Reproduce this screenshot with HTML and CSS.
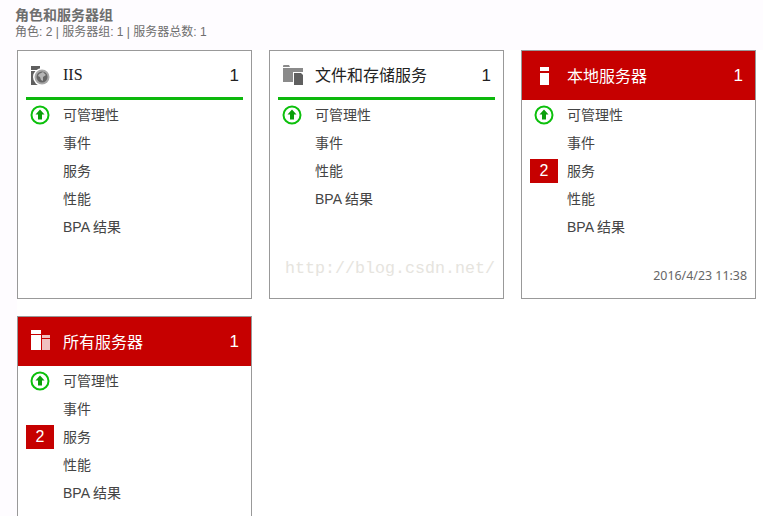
FILE: index.html
```html
<!DOCTYPE html>
<html lang="zh">
<head>
<meta charset="utf-8">
<title>角色和服务器组</title>
<link rel="stylesheet" href="styles.css">
</head>
<body>
<header class="head">
  <h1 class="title">角色和服务器组</h1>
  <p class="sub">角色: 2 | 服务器组: 1 | 服务器总数: 1</p>
</header>
<main class="grid">
  <section class="card">
    <div class="card-head ok">
      <svg class="ico" width="22" height="22" viewBox="0 0 22 22"><path fill="#5f5f5f" d="M1 3h9v4H1zM1 8h9v14H1z"/><circle cx="12" cy="14" r="9" fill="#fff"/><circle cx="12" cy="14" r="7.500" fill="#a8a8a8"/><circle cx="12" cy="14" r="5.500" fill="#666"/><path fill="#b5b5b5" d="M9 11l4-2 3 3-3 2v4l-2-1-1-3-2-1z"/></svg>
      <span class="name latin">IIS</span><span class="count">1</span>
    </div>
    <ul class="rows">
      <li class="row"><span class="slot"><svg width="20" height="20" viewBox="0 0 20 20"><circle cx="10" cy="10" r="8.500" fill="#fff" stroke="#0cc00c" stroke-width="2"/><path fill="#0a9f0a" d="M10 4.500l4.500 5H12v5H8v-5H5.500z"/></svg></span>可管理性</li>
      <li class="row"><span class="slot"></span>事件</li>
      <li class="row"><span class="slot"></span>服务</li>
      <li class="row"><span class="slot"></span>性能</li>
      <li class="row"><span class="slot"></span>BPA 结果</li>
    </ul>
  </section>
  <section class="card">
    <div class="card-head ok">
      <svg class="ico" width="22" height="22" viewBox="0 0 22 22"><path fill="#8a8a8a" d="M1 3a1 1 0 0 1 1-1h5l1 2h-7zM1 5h20v4h-10v10H1z"/><path fill="#5f5f5f" d="M12 10h7l2 2v10h-9z"/></svg>
      <span class="name">文件和存储服务</span><span class="count">1</span>
    </div>
    <ul class="rows">
      <li class="row"><span class="slot"><svg width="20" height="20" viewBox="0 0 20 20"><circle cx="10" cy="10" r="8.500" fill="#fff" stroke="#0cc00c" stroke-width="2"/><path fill="#0a9f0a" d="M10 4.500l4.500 5H12v5H8v-5H5.500z"/></svg></span>可管理性</li>
      <li class="row"><span class="slot"></span>事件</li>
      <li class="row"><span class="slot"></span>性能</li>
      <li class="row"><span class="slot"></span>BPA 结果</li>
    </ul>
    <span class="mark">http://blog.csdn.net/</span>
  </section>
  <section class="card">
    <div class="card-head alert">
      <svg class="ico" width="22" height="22" viewBox="0 0 22 22"><path fill="#fff" d="M6 3h9v4H6zM6 9h9v12H6z"/></svg>
      <span class="name">本地服务器</span><span class="count">1</span>
    </div>
    <ul class="rows">
      <li class="row"><span class="slot"><svg width="20" height="20" viewBox="0 0 20 20"><circle cx="10" cy="10" r="8.500" fill="#fff" stroke="#0cc00c" stroke-width="2"/><path fill="#0a9f0a" d="M10 4.500l4.500 5H12v5H8v-5H5.500z"/></svg></span>可管理性</li>
      <li class="row"><span class="slot"></span>事件</li>
      <li class="row"><span class="slot"><span class="badge">2</span></span>服务</li>
      <li class="row"><span class="slot"></span>性能</li>
      <li class="row"><span class="slot"></span>BPA 结果</li>
    </ul>
    <time class="stamp">2016/4/23 11:38</time>
  </section>
  <section class="card">
    <div class="card-head alert">
      <svg class="ico" width="22" height="22" viewBox="0 0 22 22"><path fill="#fff" d="M1 0h10v4H1zM1 5h10v15H1z"/><path fill="#f0c0c0" d="M12 5h8v3h-8zM12 9h8v11h-8z"/></svg>
      <span class="name">所有服务器</span><span class="count">1</span>
    </div>
    <ul class="rows">
      <li class="row"><span class="slot"><svg width="20" height="20" viewBox="0 0 20 20"><circle cx="10" cy="10" r="8.500" fill="#fff" stroke="#0cc00c" stroke-width="2"/><path fill="#0a9f0a" d="M10 4.500l4.500 5H12v5H8v-5H5.500z"/></svg></span>可管理性</li>
      <li class="row"><span class="slot"></span>事件</li>
      <li class="row"><span class="slot"><span class="badge">2</span></span>服务</li>
      <li class="row"><span class="slot"></span>性能</li>
      <li class="row"><span class="slot"></span>BPA 结果</li>
    </ul>
  </section>
</main>
</body>
</html>
```
FILE: styles.css
```css
* { box-sizing: border-box; }
body {
  margin: 0;
  height: 516px;
  overflow: hidden;
  background: #fff;
  font-family: "Liberation Sans", "Noto Sans CJK SC", sans-serif;
  color: #444;
}
.head {
  height: 50px;
  padding: 7px 0 0 15px;
  background: #fefcff;
}
.title {
  margin: 0;
  font-size: 14px;
  line-height: 17px;
  font-weight: 700;
  color: #6e6e6e;
}
.sub {
  margin: 1px 0 0;
  font-size: 12px;
  line-height: 15px;
  color: #6e6e6e;
}
.grid {
  display: grid;
  grid-template-columns: repeat(3, 235px);
  grid-auto-rows: 249px;
  gap: 17px;
  padding-left: 17px;
  background: linear-gradient(to right, #fefcff 17px, #fff 17px);
}
.card {
  position: relative;
  border: 1px solid #999;
  background: #fff;
}
.card-head {
  display: flex;
  align-items: center;
  margin: 0 8px;
  padding: 0 4px;
  color: #222;
  font-size: 16px;
}
.card-head.ok {
  height: 49px;
  border-bottom: 3px solid #0cb80c;
}
.card-head.alert {
  margin: 0;
  padding: 0 12px 1px;
  background: #c60000;
  color: #fff;
  height: 49px;
}
.ico { flex: none; margin-right: 11px; }
.name { flex: 1; }
.latin { font-family: "Liberation Serif", serif; padding-top: 2px; }
.count { font-size: 17px; padding-top: 2px; }
.ok .count { padding-top: 4px; }
.rows {
  list-style: none;
  margin: 0;
  padding: 0 0 0 8px;
}
.row {
  display: flex;
  align-items: center;
  height: 28px;
  font-size: 14px;
  color: #444;
}
.slot {
  display: flex;
  align-items: center;
  justify-content: center;
  width: 28px;
  height: 24px;
  margin-right: 9px;
  flex: none;
}
.slot > * { margin-top: 2px; }
.badge {
  display: block;
  flex: none;
  width: 28px;
  height: 24px;
  line-height: 24px;
  text-align: center;
  background: #c60000;
  color: #fff;
  font-size: 16px;
}
.stamp {
  position: absolute;
  right: 8px;
  bottom: 14px;
  font-family: "Noto Sans", sans-serif;
  font-size: 12.400px;
  line-height: 16px;
  color: #666;
}
.mark {
  position: absolute;
  left: 15px;
  top: 207px;
  font-family: "Liberation Mono", monospace;
  font-size: 16.670px;
  line-height: 22px;
  color: #e6e4de;
  white-space: nowrap;
}
```
